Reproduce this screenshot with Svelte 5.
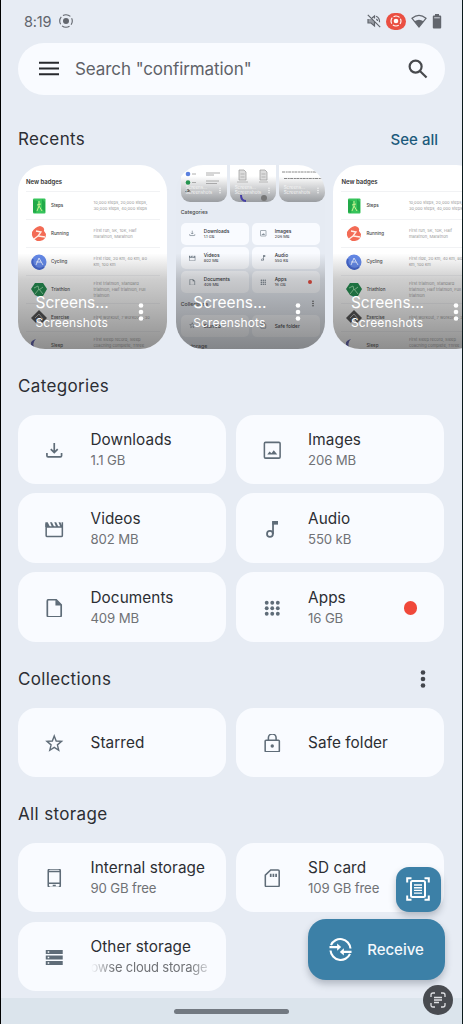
<script>
	const badges = [
		{ name: 'Steps', icon: 'steps', lines: ['10,000 steps, 20,000 steps,', '30,000 steps, 40,000 steps'] },
		{ name: 'Running', icon: 'running', lines: ['First run, 5K, 10K, Half', 'marathon, Marathon'] },
		{ name: 'Cycling', icon: 'cycling', lines: ['First ride, 20 km, 40 km, 80', 'km, 100 km'] },
		{ name: 'Triathlon', icon: 'triathlon', lines: ['First triathlon, Standard', 'triathlon, Half triathlon, Full', 'triathlon'] },
		{ name: 'Exercise', icon: 'exercise', lines: ['First workout, 7 workouts, 30'] },
		{ name: 'Sleep', icon: 'sleep', lines: ['First sleep record, Sleep', 'coaching complete, Three', 'weeks in a best sleep, 8 days'] }
	];

	const categories = [
		{ name: 'Downloads', info: '1.1 GB', icon: 'download' },
		{ name: 'Images', info: '206 MB', icon: 'image' },
		{ name: 'Videos', info: '802 MB', icon: 'video' },
		{ name: 'Audio', info: '550 kB', icon: 'audio' },
		{ name: 'Documents', info: '409 MB', icon: 'document' },
		{ name: 'Apps', info: '16 GB', icon: 'apps', dot: true }
	];

	const collections = [
		{ name: 'Starred', icon: 'star' },
		{ name: 'Safe folder', icon: 'lock' }
	];

	const storage = [
		{ name: 'Internal storage', info: '90 GB free', icon: 'phone' },
		{ name: 'SD card', info: '109 GB free', icon: 'sd' },
		{ name: 'Other storage', info: 'owse cloud storage', icon: 'storage', faded: true }
	];

	const recents = ['badges', 'files', 'badges'];
</script>

{#snippet icon(name)}
	<svg class="icon" viewBox="0 0 24 24" fill="none" stroke="currentColor" stroke-width="2">
		{#if name === 'download'}
			<path d="M12 2.500v12M7.500 10.500l4.500 4.500 4.500-4.500M2.500 15.500v3.500q0 1.500 1.500 1.500h16q1.500 0 1.500-1.500v-3.500" stroke-width="2.200" />
		{:else if name === 'image'}
			<rect x="1.800" y="1.800" width="20.400" height="20.400" rx="1.500" />
			<path d="M5.500 17.500l3-4 2.500 2.500 3-4 4.500 5.500z" fill="currentColor" stroke="none" />
		{:else if name === 'video'}
			<path d="M1.500 4.500v15.500q0 1.500 1.500 1.500h18q1.500 0 1.500-1.500v-17M2 9h20" />
			<path d="M.5 3h3l3 6h-6zM6.500 3h2.500l3 6h-3zM12 3h2.500l3 6h-3zM17.500 3h2.500l3 6h-3z" fill="currentColor" stroke="none" />
		{:else if name === 'audio'}
			<circle cx="9" cy="18" r="3.800" stroke-width="2.300" />
			<path d="M13 18.500v-17" stroke-width="2.300" />
			<path d="M12 1.300h7.500v4.700h-7.500z" fill="currentColor" stroke="none" />
		{:else if name === 'document'}
			<path d="M4.500 1h10l6.500 6.500v14q0 1.500-1.500 1.500h-15q-1.500 0-1.500-1.500v-19q0-1.500 1.500-1.500z" stroke-width="2.200" />
			<path d="M13.500 1v7.500h7.500z" fill="currentColor" stroke="none" />
		{:else if name === 'apps'}
			<g fill="currentColor" stroke="none">
				{#each [4.8, 12, 19.2] as y}
					{#each [4.8, 12, 19.2] as x}
						<circle cx={x} cy={y} r="2.500" />
					{/each}
				{/each}
			</g>
		{:else if name === 'star'}
			<path d="M12 2.500l2.500 6.600 7 .5-5.400 4.500 1.700 7-5.800-3.800-5.800 3.800 1.700-7-5.400-4.500 7-.5z" stroke-width="1.800" />
		{:else if name === 'lock'}
			<rect x="2.800" y="8" width="18.400" height="15" rx="1.200" />
			<path d="M7 8V5a5 5 0 0 1 10 0v3" />
			<circle cx="12" cy="15.500" r="2.200" fill="currentColor" stroke="none" />
		{:else if name === 'phone'}
			<rect x="4.200" y="0" width="15.600" height="24" rx="2.500" />
			<path d="M4.500 3.200h15M4.500 18.500h15M10 21.500h4" />
		{:else if name === 'sd'}
			<path d="M10 1.200h9.500q1.500 0 1.500 1.500v18.600q0 1.500-1.500 1.500h-15q-1.500 0-1.500-1.500v-13.300z" />
			<path d="M10 6v4.500M13.500 6v4.500M17 6v4.500" stroke-width="2.200" />
		{:else if name === 'storage'}
			<path d="M1 2.500h22v5.200h-22zM1 9.700h22v5.200h-22zM1 16.900h22v5.200h-22z" fill="currentColor" stroke="none" />
			<path d="M3.500 5.100h2M3.500 12.300h2M3.500 19.500h2" stroke="#f9fbff" />
		{/if}
	</svg>
{/snippet}

{#snippet dots()}
	<svg class="dots" viewBox="0 0 6 20" fill="currentColor">
		<circle cx="3" cy="3.500" r="2.300" />
		<circle cx="3" cy="10" r="2.300" />
		<circle cx="3" cy="16.500" r="2.300" />
	</svg>
{/snippet}

{#snippet badge(name)}
	<svg class="badge" viewBox="0 0 16 16">
		{#if name === 'steps'}
			<rect x="2" y=".5" width="12.500" height="15" rx="1" fill="#37c45b" />
			<path d="M2 2l5 1-2 12-3-1zM11 1l3 3v10l-3-3z" fill="#22a949" />
			<path d="M8 3v5l-2 5M8 8l3 5M6 7l4-1" stroke="#c9f08f" fill="none" />
		{:else if name === 'running'}
			<path d="M9 0q5 1 4 5l2 3q0 6-6 7H6Q0 12 1 6q3-5 8-6z" fill="#f36b55" />
			<path d="M5 5l5 1-3 4 7 1M7 10l-4 3" stroke="#fff0e8" stroke-width="1.300" fill="none" />
		{:else if name === 'cycling'}
			<circle cx="8" cy="8" r="7.500" fill="#6388e8" />
			<path d="M2 5a7 7 0 0 0 11 8" stroke="#4365cc" stroke-width="2" fill="none" />
			<path d="M5 11l3-7 4 7M5 8h5" stroke="#dce6ff" fill="none" />
		{:else if name === 'triathlon'}
			<path d="M4 1h8l4 6-4 7-4 1-4-2-4-6z" fill="#168746" />
			<path d="M3 6l4-2 1 4 4-3M4 12l4-5 4 5" stroke="#8bd7a0" fill="none" />
		{:else if name === 'exercise'}
			<path d="M8 0l8 8-5 5-3-5-3 5-5-5z" fill="#454545" />
			<path d="M4 8l4-4 4 5" stroke="#aaa" fill="none" />
		{:else}
			<path d="M5 1a7 7 0 0 0 9 11A8 8 0 1 1 5 1z" fill="#4b4da8" />
		{/if}
	</svg>
{/snippet}

{#snippet badgeShot()}
	<div class="shot badge-shot">
		<div class="shot-title">New badges</div>
		{#each badges as b}
			<div class="badge-row">
				{@render badge(b.icon)}
				<span class="badge-name">{b.name}</span>
				<span class="badge-desc">
					{#each b.lines as line}<span>{line}</span>{/each}
				</span>
			</div>
		{/each}
	</div>
{/snippet}

{#snippet miniTiles(items)}
	<div class="mini-grid">
		{#each items as item}
			<div class="mini-tile">
				{@render icon(item.icon)}
				<div class="mini-text">
					<b>{item.name}</b>
					{#if item.info}<span>{item.info}</span>{/if}
				</div>
				{#if item.dot}<i class="mini-dot"></i>{/if}
			</div>
		{/each}
	</div>
{/snippet}

{#snippet filesShot()}
	<div class="shot files-shot">
		<div class="mini-recents">
			<div class="mini-card">
				<svg viewBox="0 0 46 37">
					<circle cx="7" cy="9" r="2.300" fill="#5a80df" />
					<circle cx="7" cy="17.500" r="2.300" fill="#24944f" />
					<path d="M4 27l3-3 3 3z" fill="#444" />
					<path d="M11 9h4M11 17.500h4M25 8h14M25 10h8M25 16h13M25 18.500h11" stroke="#999" stroke-width=".8" />
				</svg>
				<div class="mini-caption"><span>Screens...</span><span>Screenshots</span></div>
				{@render dots()}
			</div>
			<div class="mini-card">
				<svg viewBox="0 0 46 37">
					<path d="M9 5h5l2 2v8h-7zM30 5h5l2 2v8h-7z" fill="#ddd" stroke="#999" stroke-width=".7" />
					<path d="M10.500 9h4M10.500 12h4M31.500 9h4M31.500 12h4M7 17h11M29 17h9" stroke="#aaa" stroke-width=".8" />
					<path d="M11 30q0 6 5 6" stroke="#443ea5" stroke-width="2" fill="none" />
					<circle cx="34" cy="33" r="3" fill="#777" />
				</svg>
				<div class="mini-caption"><span>Screens...</span><span>Screenshots</span></div>
				{@render dots()}
			</div>
			<div class="mini-card">
				<svg viewBox="0 0 46 37">
					<path d="M3 7h36M5 13.500h38" stroke="#888" stroke-width="1" stroke-dasharray="3 .7 2 .5" />
				</svg>
				<div class="mini-caption"><span>Screens...</span><span>Screenshots</span></div>
				{@render dots()}
			</div>
		</div>
		<div class="mini-heading">Categories</div>
		{@render miniTiles(categories)}
		<div class="mini-heading low"><span>Collections</span><em>{@render dots()}</em></div>
		{@render miniTiles(collections)}
		<div class="mini-heading last">All storage</div>
	</div>
{/snippet}

{#snippet tiles(items)}
	<div class="grid">
		{#each items as item}
			<div class="tile">
				{@render icon(item.icon)}
				<div class="tile-text">
					<div class="name">{item.name}</div>
					{#if item.info}
						<div class="info" class:faded={item.faded}>{item.info}</div>
					{/if}
				</div>
				{#if item.dot}<span class="red-dot"></span>{/if}
			</div>
		{/each}
	</div>
{/snippet}

<div class="screen">
	<header class="status">
		<span class="time">8:19</span>
		<svg class="rec" viewBox="0 0 16 16" fill="none" stroke="currentColor" stroke-width="1.100">
			<circle cx="8" cy="8" r="6.300" stroke-dasharray="7.900 2" stroke-dashoffset="3.950" />
			<circle cx="8" cy="8" r="3" fill="currentColor" stroke="none" />
		</svg>
		<div class="status-icons">
			<svg width="14" height="14" viewBox="0 0 14 14" fill="none" stroke="currentColor" stroke-width="1.200">
				<path d="M.8.8l12.400 12.400M1 5v4h3l3.500 3V7M5 4l2.500-2v2.500M9 2.300q3.800 1.500 3.500 6M9.300 5q1.200.7 1.200 2" />
				<path d="M1 5h4l2.500 3v4L4 9H1z" fill="currentColor" fill-opacity=".6" stroke="none" />
			</svg>
			<span class="cast">
				<svg width="12" height="12" viewBox="0 0 12 12" fill="none" stroke="#fff" stroke-width="1.100">
					<circle cx="6" cy="6" r="5" stroke-dasharray="6.350 1.500" stroke-dashoffset="3.170" />
					<circle cx="6" cy="6" r="2.300" fill="#fff" stroke="none" />
				</svg>
			</span>
			<svg width="16" height="14" viewBox="0 0 16 14">
				<path d="M1 4.300q7-6 14 0L8 13z" fill="none" stroke="currentColor" stroke-width="1.200" />
				<path d="M3.500 7.200q4.500-3 9 0L8 13z" fill="currentColor" />
			</svg>
			<svg class="battery" width="10" height="15" viewBox="0 0 10 15">
				<path d="M3 0h4v1.500h1.200q1 0 1 1v11q0 1-1 1H1.800q-1 0-1-1v-11q0-1 1-1H3z" fill="currentColor" />
				<path d="M2.200 3.800h5.600" stroke="#dfe3ea" stroke-width=".9" />
			</svg>
		</div>
	</header>

	<div class="search">
		<svg class="menu" viewBox="0 0 21 15" stroke="#27292d" stroke-width="2.100">
			<path d="M0 1.500h21M0 7.500h21M0 13.500h21" />
		</svg>
		<span>Search "confirmation"</span>
		<svg class="lens" viewBox="0 0 21 21" fill="none" stroke="#47494d" stroke-width="2.300">
			<circle cx="8" cy="8" r="6.300" />
			<path d="M12.500 12.500l7 7" />
		</svg>
	</div>

	<div class="heading first">
		<h2>Recents</h2>
		<a href="#recents">See all</a>
	</div>
	<div class="recents">
		{#each recents as kind}
			<div class="recent">
				{#if kind === 'badges'}
					{@render badgeShot()}
				{:else}
					{@render filesShot()}
				{/if}
				<div class="caption">
					<div class="caption-text">
						<div class="caption-name">Screens...</div>
						<div class="caption-folder">Screenshots</div>
					</div>
					{@render dots()}
				</div>
			</div>
		{/each}
	</div>

	<div class="heading"><h2>Categories</h2></div>
	{@render tiles(categories)}

	<div class="heading">
		<h2>Collections</h2>
		<span class="more">{@render dots()}</span>
	</div>
	{@render tiles(collections)}

	<div class="heading"><h2>All storage</h2></div>
	{@render tiles(storage)}

	<div class="navbar"><span></span></div>

	<button class="scan" aria-label="Scan">
		<svg viewBox="0 0 24 24" fill="none" stroke="#fff" stroke-width="2">
			<path d="M1.200 5.500v-4.300h4.300M18.500 1.200h4.300v4.300M22.800 18.500v4.300h-4.300M5.500 22.800h-4.300v-4.300" />
			<rect x="5" y="4" width="14" height="16" rx="1.500" />
			<path d="M8 8h8M8 10.700h8M8 13.400h8M8 16.100h8" stroke-width="1.400" />
		</svg>
	</button>
	<button class="receive">
		<svg viewBox="0 0 24 24" fill="none" stroke="#fff" stroke-width="2.200">
			<path d="M2.100 7.500a10.600 10.600 0 0 1 20.300 3.500M21.900 16.500A10.600 10.600 0 0 1 1.600 13" />
			<path d="M.5 9.500h9M23.500 14.500h-9" />
			<path d="M8.500 5.800l4.200 3.700-4.200 3.700zM15.500 10.800l-4.200 3.700 4.200 3.700z" fill="#fff" stroke="none" />
		</svg>
		<span>Receive</span>
	</button>
	<button class="lens-fab" aria-label="Select text">
		<svg viewBox="0 0 16 16" fill="none" stroke="#dfe1e4" stroke-width="1.300">
			<path d="M1 5V3q0-2 2-2h2M11 1h2q2 0 2 2v2M15 11v2q0 2-2 2h-2M5 15H3q-2 0-2-2v-2" />
			<path d="M4 5.500h8M4 8h8M4 10.500h5" />
		</svg>
	</button>
</div>

<style>
	:global(body) {
		margin: 0;
		background: #e7ecf4;
	}
	.screen {
		position: relative;
		box-sizing: border-box;
		width: 463px;
		height: 1024px;
		overflow: hidden;
		display: flex;
		flex-direction: column;
		padding-left: 17px;
		border-left: 1px solid #000;
		border-right: 1px solid #0b1a1c;
		background: #e7ecf4;
		color: #2c2e33;
		font-family: Inter, 'Liberation Sans', sans-serif;
	}
	.status {
		flex: none;
		display: flex;
		align-items: center;
		height: 42.5px;
		padding: 0 20px 0 6px;
		box-sizing: border-box;
		color: #62666d;
	}
	.time {
		width: 28px;
		font-size: 14.500px;
		letter-spacing: -0.2px;
		white-space: nowrap;
	}
	.rec {
		width: 16px;
		height: 16px;
		margin-left: 6px;
	}
	.status-icons {
		display: flex;
		align-items: center;
		margin-left: auto;
		gap: 5px;
	}
	.cast {
		display: flex;
		align-items: center;
		justify-content: center;
		width: 20px;
		height: 17px;
		border-radius: 9px;
		background: #ea4f42;
	}
	.search {
		flex: none;
		display: flex;
		align-items: center;
		box-sizing: border-box;
		width: 427px;
		height: 52.5px;
		padding: 0 17px 0 21px;
		border-radius: 27px;
		background: #f9fbff;
		color: #5f6268;
		font-size: 17px;
		letter-spacing: -0.08px;
	}
	.menu {
		width: 20px;
		height: 15px;
		margin-right: 16px;
	}
	.lens {
		width: 20px;
		height: 20px;
		margin-left: auto;
	}
	.heading {
		flex: none;
		display: flex;
		align-items: center;
		justify-content: space-between;
		height: 56.5px;
		margin-top: 9px;
		padding-right: 24px;
	}
	.heading.first {
		height: 52px;
		margin-top: 18px;
	}
	h2 {
		margin: 0;
		font-size: 17px;
		font-weight: 400;
		letter-spacing: 0.35px;
	}
	a {
		color: #1c5a7b;
		font-size: 15px;
		font-weight: 500;
		text-decoration: none;
	}
	.dots {
		display: block;
		width: 6px;
		height: 20px;
	}
	.more {
		margin-right: 12.5px;
		color: #43464c;
	}
	.recents {
		flex: none;
		display: flex;
		gap: 8.5px;
		overflow: hidden;
	}
	.recent {
		flex: none;
		position: relative;
		width: 149.2px;
		height: 184px;
		border-radius: 27px;
		overflow: hidden;
	}
	.shot {
		height: 184px;
		box-sizing: border-box;
		overflow: hidden;
	}
	.caption {
		position: absolute;
		inset: 0;
		display: flex;
		align-items: flex-end;
		justify-content: space-between;
		padding: 0 23.500px 17px 17.5px;
		background: linear-gradient(rgba(50, 50, 50, 0) 48%, rgba(50, 50, 50, 0.24) 62%, rgba(50, 50, 50, 0.55) 100%);
		color: #fff;
	}
	.caption .dots {
		margin-bottom: 10px;
	}
	.caption-name {
		font-size: 15.5px;
		line-height: 20px;
	}
	.caption-folder {
		font-size: 12px;
		line-height: 19px;
		letter-spacing: 0.15px;
	}
	.badge-shot {
		padding: 12px 7px 0 8px;
		background: #fff;
	}
	.shot-title {
		height: 14px;
		font-size: 6px;
		line-height: 9px;
		font-weight: 600;
		color: #333;
	}
	.badge-row {
		display: flex;
		align-items: center;
		box-sizing: border-box;
		height: 28px;
		border-top: 1px solid #f1f2f4;
	}
	.badge {
		flex: none;
		width: 16px;
		height: 16px;
		margin-left: 4.5px;
	}
	.badge-name {
		flex: none;
		width: 42.5px;
		margin-left: 4.5px;
		font-size: 4.500px;
		font-weight: 500;
		color: #444;
	}
	.badge-desc {
		display: flex;
		flex-direction: column;
		font-size: 4.1px;
		line-height: 6px;
		white-space: nowrap;
		color: #999;
	}
	.files-shot {
		padding: 0 0 0 5px;
		background: #e6ebf3;
	}
	.mini-recents {
		display: flex;
		gap: 3px;
		height: 36.5px;
	}
	.mini-card {
		flex: none;
		display: flex;
		align-items: flex-end;
		justify-content: space-between;
		position: relative;
		width: 46px;
		height: 36.5px;
		border-radius: 0 0 9px 9px;
		overflow: hidden;
		background: linear-gradient(#fff 30%, #9a9da1);
		color: #f4f4f4;
	}
	.mini-card > svg:first-child {
		position: absolute;
		inset: 0;
	}
	.mini-card .dots {
		position: relative;
		width: 2px;
		height: 7px;
		margin: 0 6px 8px 0;
	}
	.mini-caption {
		position: relative;
		display: flex;
		flex-direction: column;
		padding: 0 0 6px 5px;
		font-size: 4.5px;
		line-height: 5.5px;
	}
	.mini-heading {
		display: flex;
		align-items: center;
		justify-content: space-between;
		height: 21px;
		font-size: 5.2px;
		font-weight: 500;
		color: #444;
	}
	.mini-heading.low {
		height: 21.5px;
	}
	.mini-heading.last {
		height: 18px;
	}
	.mini-heading em {
		margin-right: 11px;
	}
	.mini-heading .dots {
		width: 2px;
		height: 7px;
	}
	.mini-grid {
		display: grid;
		grid-template-columns: 68px 68px;
		gap: 2.3px 3px;
	}
	.mini-tile {
		display: flex;
		align-items: center;
		height: 22px;
		border-radius: 5px;
		background: #f9fbff;
	}
	.mini-tile .icon {
		width: 6.500px;
		height: 6.500px;
		margin: 0 8px 0 8.500px;
	}
	.mini-text {
		display: flex;
		flex-direction: column;
		font-size: 4px;
		line-height: 6px;
		white-space: nowrap;
	}
	.mini-text b {
		font-size: 4.8px;
		font-weight: 500;
	}
	.mini-dot {
		width: 4px;
		height: 4px;
		margin: 0 8px 0 auto;
		border-radius: 50%;
		background: #e84336;
	}
	.grid {
		flex: none;
		display: grid;
		grid-template-columns: 208.2px 208.2px;
		gap: 9.4px;
	}
	.tile {
		display: flex;
		align-items: center;
		box-sizing: border-box;
		height: 69.6px;
		padding: 1px 22px 0 27px;
		border-radius: 18px;
		background: #f9fbff;
	}
	.icon {
		flex: none;
		width: 18.5px;
		height: 18.5px;
		color: #5f6c78;
	}
	.tile-text {
		margin-left: 27px;
		white-space: nowrap;
	}
	.name {
		font-size: 15.3px;
		font-weight: 400;
		line-height: 21px;
		letter-spacing: 0.08px;
	}
	.info {
		font-size: 13.2px;
		line-height: 20px;
		letter-spacing: -0.15px;
		color: #707276;
	}
	.faded {
		width: 116px;
		font-size: 13px;
		letter-spacing: -0.2px;
		mask-image: linear-gradient(90deg, transparent, #000 20%, #000 85%, rgba(0, 0, 0, 0.3));
	}
	.red-dot {
		width: 13.5px;
		height: 13.5px;
		margin: 0 4.5px 0 auto;
		border-radius: 50%;
		background: #f0483a;
	}
	.navbar {
		flex: none;
		display: flex;
		justify-content: center;
		height: 26px;
		margin: auto 0 0 -17px;
		background: #dbe4ec;
	}
	.navbar span {
		width: 115px;
		height: 4.5px;
		margin-top: 11px;
		border-radius: 3px;
		background: #727981;
	}
	button {
		position: absolute;
		display: flex;
		align-items: center;
		justify-content: center;
		padding: 0;
		border: 0;
		background: #3c80a7;
		box-shadow: 0 4px 7px rgba(40, 50, 70, 0.28);
	}
	.scan {
		right: 21.5px;
		top: 867px;
		width: 44.5px;
		height: 44.5px;
		border-radius: 13px;
	}
	.scan svg {
		width: 24px;
		height: 26px;
	}
	.receive {
		right: 17px;
		top: 919px;
		width: 137px;
		height: 61px;
		gap: 15px;
		border-radius: 18px;
		color: #f3f8fc;
		font-family: inherit;
		font-size: 15px;
		font-weight: 500;
	}
	.receive svg {
		width: 23px;
		height: 23px;
	}
	.lens-fab {
		right: 9px;
		top: 985px;
		width: 30px;
		height: 30px;
		border-radius: 50%;
		background: #484b50;
		box-shadow: none;
	}
	.lens-fab svg {
		width: 16px;
		height: 16px;
	}
</style>
